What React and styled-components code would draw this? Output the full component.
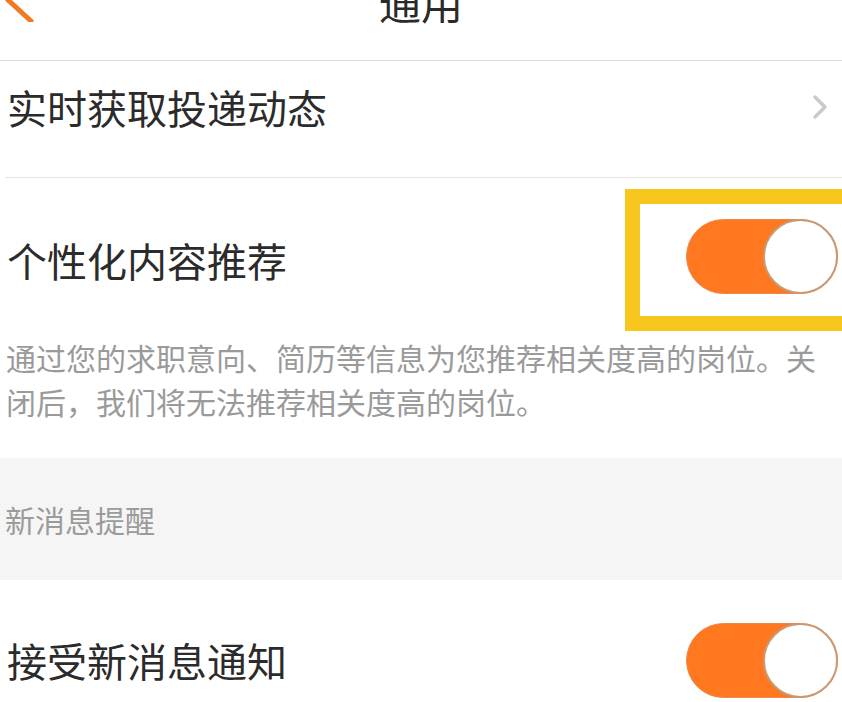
import React from 'react';
import styled, { createGlobalStyle } from 'styled-components';

const GlobalStyle = createGlobalStyle`
  *, *::before, *::after {
    box-sizing: border-box;
  }
  body {
    margin: 0;
    background: #fff;
    overflow: hidden;
    font-family: "Noto Sans CJK SC", "Noto Sans", sans-serif;
  }
`;

const Page = styled.div`
  width: 842px;
  height: 702px;
  overflow: hidden;
`;

const Header = styled.div`
  height: 61px;
  border-bottom: 1px solid #dadada;
  display: grid;
  grid-template-columns: 60px 1fr 60px;
  align-items: start;
`;

const BackIcon = styled.svg`
  display: block;
  margin-top: -22px;
`;

const Title = styled.div`
  margin-top: -19px;
  font-size: 42px;
  line-height: 42px;
  color: #2a2a2a;
  text-align: center;
`;

const Row = styled.div`
  display: flex;
  align-items: center;
  justify-content: space-between;
  height: ${(p) => (p.$height ? `${p.$height}px` : 'auto')};
  padding: ${(p) => p.$pad || '0'};
  margin-left: 5px;
  border-bottom: ${(p) => (p.$divider ? '1px solid #e6e6e6' : 'none')};
`;

const Label = styled.span`
  font-size: 40px;
  color: #2b2b2b;
  padding-left: 2px;
  white-space: nowrap;
`;

const Chevron = styled.svg`
  display: block;
  margin-right: 14px;
`;

const Highlight = styled.div`
  border: 15px solid #f8c71e;
  padding: 15px 14px 22px 46px;
  margin-right: -25px;
`;

const Track = styled.div`
  width: 152px;
  height: 75px;
  border-radius: 38px;
  background: #ff7820;
  border: 1px solid #e98a4c;
  display: flex;
  justify-content: flex-end;
  align-items: center;
`;

const Knob = styled.div`
  width: 75px;
  height: 75px;
  margin-right: -1px;
  border-radius: 50%;
  background: #fff;
  border: 2px solid #c99a76;
`;

const Description = styled.p`
  margin: 0;
  padding: 4px 8px 35px 6px;
  font-size: 30px;
  line-height: 44px;
  color: #9a9a9a;
`;

const SectionHeader = styled.div`
  height: 122px;
  background: #f5f5f5;
  display: flex;
  align-items: center;
  padding-left: 5px;
  font-size: 30px;
  color: #9b9b9b;
`;

const Switch = () => (
  <Track>
    <Knob />
  </Track>
);

export default function App() {
  return (
    <Page>
      <GlobalStyle />
      <Header>
        <BackIcon width="40" height="44" viewBox="0 0 40 44">
          <polyline
            points="31,1 8,22 31,43"
            fill="none"
            stroke="#f07a24"
            strokeWidth="5"
            strokeLinecap="round"
            strokeLinejoin="round"
          />
        </BackIcon>
        <Title>通用</Title>
        <div />
      </Header>

      <Row $height={117} $pad="0 0 24px 0" $divider>
        <Label>实时获取投递动态</Label>
        <Chevron width="16" height="26" viewBox="0 0 16 26">
          <polyline
            points="3,3 13,13 3,23"
            fill="none"
            stroke="#cacaca"
            strokeWidth="3.5"
            strokeLinecap="round"
            strokeLinejoin="round"
          />
        </Chevron>
      </Row>

      <Row $pad="11px 0 0 0">
        <Label>个性化内容推荐</Label>
        <Highlight>
          <Switch />
        </Highlight>
      </Row>

      <Description>
        通过您的求职意向、简历等信息为您推荐相关度高的岗位。关闭后，我们将无法推荐相关度高的岗位。
      </Description>

      <SectionHeader>新消息提醒</SectionHeader>

      <Row $height={160} $pad="0 4px 0 0">
        <Label>接受新消息通知</Label>
        <Switch />
      </Row>
    </Page>
  );
}
